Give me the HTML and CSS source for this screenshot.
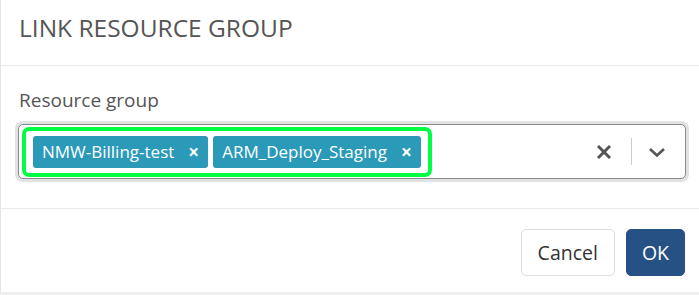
FILE: index.html
```html
<!DOCTYPE html>
<html>
<head>
  <meta charset="UTF-8">
  <title>Link Resource Group</title>
  <link rel="stylesheet" href="styles.css">
</head>
<body>
  <div class="modal">
    <div class="modal-header">
      <h2 class="modal-title">LINK RESOURCE GROUP</h2>
    </div>
    <div class="modal-body">
      <label class="field-label">Resource group</label>
      <div class="select">
        <div class="select-values">
          <div class="highlight">
            <span class="chip">NMW-Billing-test <span class="chip-remove">&times;</span></span>
            <span class="chip">ARM_Deploy_Staging <span class="chip-remove">&times;</span></span>
          </div>
        </div>
        <div class="select-indicators">
          <svg class="icon-clear" width="16" height="16" viewBox="0 0 16 16">
            <path d="M2 2 L14 14 M14 2 L2 14" stroke="#555" stroke-width="3"/>
          </svg>
          <span class="indicator-sep"></span>
          <svg class="icon-chevron" width="18" height="12" viewBox="0 0 18 12">
            <path d="M2 3 L9 9.5 L16 3" stroke="#555" stroke-width="2.6" fill="none"/>
          </svg>
        </div>
      </div>
    </div>
    <div class="modal-footer">
      <button class="btn btn-default">Cancel</button>
      <button class="btn btn-primary">OK</button>
    </div>
  </div>
</body>
</html>
```

FILE: styles.css
```css
body {
  margin: 0;
  font-family: "Open Sans", Arial, sans-serif;
  background-color: #eeeeee;
  height: 295px;
}

.modal {
  background-color: #ffffff;
  border-left: 1px solid #e5e5e5;
  height: 292px;
  box-sizing: border-box;
}

.modal-header {
  height: 66px;
  box-sizing: border-box;
  padding: 0 18px;
  border-bottom: 1px solid #e9e9e9;
  display: flex;
  align-items: center;
}

.modal-title {
  margin: 0;
  font-size: 24.5px;
  font-weight: normal;
  color: #555555;
  padding-bottom: 10px;
}

.modal-body {
  height: 143px;
  box-sizing: border-box;
  padding: 21px 14px 0 14px;
  border-bottom: 1px solid #e9e9e9;
}

.field-label {
  display: block;
  font-size: 19px;
  color: #555555;
  margin: 0 0 11px 4px;
  line-height: 26px;
}

.select {
  display: flex;
  align-items: center;
  height: 55px;
  box-sizing: border-box;
  border: 1px solid #8a8a8a;
  border-radius: 5px;
  box-shadow: 0 0 0 3px #e2e2e2;
  margin: 0 0 0 3px;
  width: 668px;
  background: #ffffff;
}

.select-values {
  flex: 1;
  display: flex;
  align-items: center;
  padding-left: 3px;
}

.highlight {
  display: flex;
  gap: 5px;
  border: 4px solid #00ff44;
  border-radius: 7px;
  padding: 5px 7px;
}

.chip {
  display: flex;
  align-items: center;
  background-color: #2a9ab8;
  color: #ffffff;
  font-size: 17px;
  height: 32px;
  padding: 0 9px;
  border-radius: 3px;
}

.chip-remove {
  font-weight: bold;
  font-size: 19px;
  margin-left: 14px;
}

.select-indicators {
  display: flex;
  align-items: center;
  padding-right: 19px;
}

.icon-clear {
  display: block;
}

.indicator-sep {
  width: 1px;
  height: 27px;
  background-color: #cccccc;
  margin: 0 16px 0 19px;
}

.icon-chevron {
  display: block;
}

.modal-footer {
  display: flex;
  justify-content: flex-end;
  gap: 11px;
  padding: 20px 14px 0 0;
}

.btn {
  font-family: "Open Sans", Arial, sans-serif;
  font-size: 19.5px;
  height: 47px;
  padding: 0 15px;
  border-radius: 5px;
  cursor: pointer;
}

.btn-default {
  background-color: #ffffff;
  color: #333333;
  border: 1px solid #dddddd;
  padding: 0 16px;
}

.btn-primary {
  background-color: #265184;
  color: #ffffff;
  border: 1px solid #265184;
}
```
